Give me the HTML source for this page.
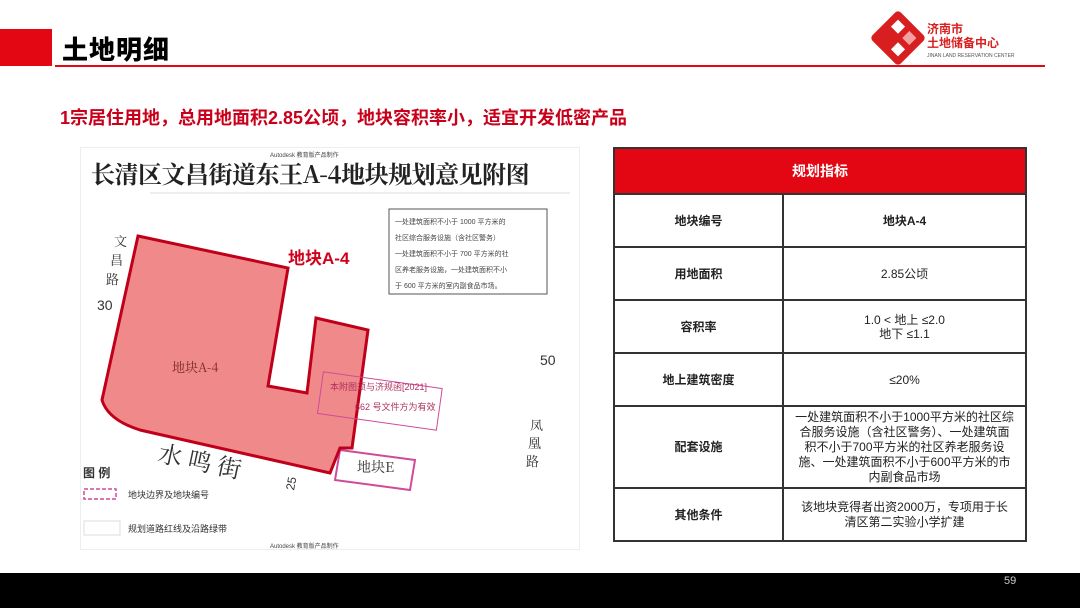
<!DOCTYPE html><html><head><meta charset="utf-8"><style>
*{margin:0;padding:0;box-sizing:border-box}
body{width:1080px;height:608px;background:#fff;position:relative;overflow:hidden;font-family:"Liberation Sans","Noto Sans CJK SC",sans-serif}
.a{position:absolute}
table{border-collapse:collapse;position:absolute;left:613px;top:147px;width:414px}
td{border:2px solid #333;text-align:center;font-size:12px;color:#222;line-height:14px}
td.l{font-weight:bold;width:169px}
th{background:#e30613;color:#fff;font-size:14px;height:46px;border:2px solid #333}
</style></head><body>
<div class="a" style="left:0;top:29px;width:52px;height:37px;background:#e30613"></div>
<div class="a" style="left:62px;top:30px;font-size:26px;font-weight:900;color:#000;letter-spacing:1px">土地明细</div>
<div class="a" style="left:55px;top:65px;width:990px;height:2px;background:#e30613"></div>
<div class="a" style="left:60px;top:104px;font-size:18px;font-weight:bold;color:#c8001a">1宗居住用地，总用地面积2.85公顷，地块容积率小，适宜开发低密产品</div>
<svg class="a" style="left:870px;top:10px" width="56" height="56" viewBox="0 0 56 56"><g transform="rotate(45 28 28)" fill="#d81e1e"><rect x="8" y="8" width="40" height="40" rx="4"/><rect x="15" y="15" width="10" height="10" fill="#fff"/><rect x="31" y="31" width="10" height="10" fill="#fff"/><rect x="31" y="15" width="10" height="10" fill="#f2a0a0"/></g></svg>
<div class="a" style="left:927px;top:22px;font-size:12px;font-weight:bold;color:#d81e1e;line-height:14px">济南市<br>土地储备中心</div>
<div class="a" style="left:927px;top:53px;font-size:5px;color:#555">JINAN LAND RESERVATION CENTER</div>
<div class="a" style="left:80px;top:147px;width:500px;height:403px;background:#fff;border:1px solid #eee"></div>
<div class="a" style="left:270px;top:150px;font-size:6px;color:#444">Autodesk 教育版产品制作</div>
<div class="a" style="left:91px;top:155px;font-size:24px;font-weight:bold;color:#222;font-family:'Noto Serif CJK SC',serif;letter-spacing:-0.5px">长清区文昌街道东王A-4地块规划意见附图</div>
<svg class="a" style="left:80px;top:180px" width="500" height="370" viewBox="80 180 500 370">
<polyline points="150,193 570,193" stroke="#ddd" fill="none"/>
<rect x="389" y="209" width="158" height="85" fill="#fff" stroke="#555"/>
<text x="395" y="224" font-size="7" fill="#444">一处建筑面积不小于 1000 平方米的</text>
<text x="395" y="240" font-size="7" fill="#444">社区综合服务设施（含社区警务）</text>
<text x="395" y="256" font-size="7" fill="#444">一处建筑面积不小于 700 平方米的社</text>
<text x="395" y="272" font-size="7" fill="#444">区养老服务设施，一处建筑面积不小</text>
<text x="395" y="288" font-size="7" fill="#444">于 600 平方米的室内副食品市场。</text>
<polygon points="340,450 415,460 410,490 335,480" fill="#fff" stroke="#d04a9a" stroke-width="2"/>
<text x="357" y="472" font-size="14" fill="#333" font-family="Noto Serif CJK SC">地块E</text>
<path d="M138,236 L288,268 L268,386 L307,393 L316,318 L368,330 L352,448 L340,448 L330,473 L140,430 Q108,420 102,400 Z" fill="#f08a8a" stroke="#c0001a" stroke-width="3"/>
<rect x="320" y="380" width="120" height="42" fill="none" stroke="#d04a9a" transform="rotate(8 380 400)"/>
<text x="330" y="390" font-size="9" fill="#b03060">本附图须与济规函[2021]</text>
<text x="355" y="410" font-size="9" fill="#b03060">662 号文件方为有效</text>
<text x="172" y="372" font-size="13" fill="#7a2a2a" font-family="Noto Serif CJK SC">地块A-4</text>
<text x="288" y="264" font-size="17" font-weight="bold" fill="#d0021b">地块A-4</text>
<text x="114" y="246" font-size="13" fill="#333" font-family="Noto Serif CJK SC">文</text>
<text x="110" y="265" font-size="13" fill="#333" font-family="Noto Serif CJK SC">昌</text>
<text x="106" y="284" font-size="13" fill="#333" font-family="Noto Serif CJK SC">路</text>
<text x="97" y="310" font-size="14" fill="#333">30</text>
<text x="540" y="365" font-size="14" fill="#333">50</text>
<text x="530" y="430" font-size="13" fill="#333" font-family="Noto Serif CJK SC">凤</text>
<text x="528" y="448" font-size="13" fill="#333" font-family="Noto Serif CJK SC">凰</text>
<text x="526" y="466" font-size="13" fill="#333" font-family="Noto Serif CJK SC">路</text>
<text x="158" y="470" font-size="24" fill="#333" font-family="Noto Serif CJK SC" transform="rotate(12 200 460)">水 鸣 街</text>
<text x="285" y="490" font-size="12" fill="#333" transform="rotate(-80 290 485)">25</text>
<text x="83" y="477" font-size="12" font-weight="bold" fill="#333">图 例</text>
<rect x="84" y="489" width="32" height="10" fill="none" stroke="#d04a9a" stroke-dasharray="4 2" stroke-width="1.5"/>
<text x="128" y="498" font-size="9" fill="#333">地块边界及地块编号</text>
<rect x="84" y="521" width="36" height="14" fill="none" stroke="#ddd"/>
<text x="128" y="532" font-size="9" fill="#333">规划道路红线及沿路绿带</text>
<text x="270" y="548" font-size="6" fill="#444">Autodesk 教育版产品制作</text>
</svg>
<table>
<tr><th colspan="2">规划指标</th></tr>
<tr style="height:53px"><td class="l">地块编号</td><td style="font-weight:bold">地块A-4</td></tr>
<tr style="height:53px"><td class="l">用地面积</td><td>2.85公顷</td></tr>
<tr style="height:53px"><td class="l">容积率</td><td>1.0 &lt; 地上 ≤2.0<br>地下 ≤1.1</td></tr>
<tr style="height:53px"><td class="l">地上建筑密度</td><td>≤20%</td></tr>
<tr style="height:82px"><td class="l">配套设施</td><td style="line-height:15px;padding:0 10px">一处建筑面积不小于1000平方米的社区综合服务设施（含社区警务）、一处建筑面积不小于700平方米的社区养老服务设施、一处建筑面积不小于600平方米的市内副食品市场</td></tr>
<tr style="height:53px"><td class="l">其他条件</td><td style="line-height:15px;padding:0 12px">该地块竞得者出资2000万，专项用于长清区第二实验小学扩建</td></tr>
</table>
<div class="a" style="left:0;top:573px;width:1080px;height:35px;background:#000"></div>
<div class="a" style="left:1004px;top:575px;font-size:11px;color:#ccc">59</div>
</body></html>
